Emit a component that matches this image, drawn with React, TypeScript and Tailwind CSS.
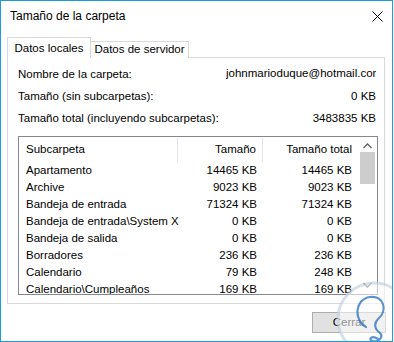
import type { ReactNode } from "react";

type FolderRow = {
  name: string;
  size: string;
  total: string;
};

const rows: FolderRow[] = [
  { name: "Apartamento", size: "14465 KB", total: "14465 KB" },
  { name: "Archive", size: "9023 KB", total: "9023 KB" },
  { name: "Bandeja de entrada", size: "71324 KB", total: "71324 KB" },
  { name: "Bandeja de entrada\\System X", size: "0 KB", total: "0 KB" },
  { name: "Bandeja de salida", size: "0 KB", total: "0 KB" },
  { name: "Borradores", size: "236 KB", total: "236 KB" },
  { name: "Calendario", size: "79 KB", total: "248 KB" },
  { name: "Calendario\\Cumpleaños", size: "169 KB", total: "169 KB" },
];

function InfoLine({ label, value }: { label: string; value: ReactNode }) {
  return (
    <div className="flex h-[22px] items-center justify-between">
      <span className="whitespace-nowrap">{label}</span>
      <span className="whitespace-nowrap">{value}</span>
    </div>
  );
}

function Watermark() {
  return (
    <svg
      className="pointer-events-none absolute left-[335px] top-[280px]"
      width="76"
      height="76"
      viewBox="0 0 76 76"
    >
      <circle cx="38" cy="38" r="36" fill="rgba(255,255,255,0.55)" stroke="rgba(190,205,220,0.6)" strokeWidth="3" />
      <path
        d="M30 46 C18 40 18 18 34 16 C48 14 52 30 42 38 C38 42 38 48 44 52 C48 56 42 62 36 60 C32 58 36 54 42 58"
        fill="none"
        stroke="rgba(40,110,190,0.75)"
        strokeWidth="2.2"
        strokeLinecap="round"
      />
    </svg>
  );
}

export default function App() {
  return (
    <div className="relative h-[342px] w-[393px] overflow-hidden border border-[#1e9be6] bg-white font-['Liberation_Sans','Noto_Sans',sans-serif] text-[11.5px] leading-none text-black">
      {/* title bar */}
      <div className="flex h-[30px] items-center justify-between pl-[9px] pr-[9px]">
        <span className="whitespace-nowrap text-[12px]">Tamaño de la carpeta</span>
        <svg width="11" height="11" viewBox="0 0 11 11">
          <path d="M0.5 0.5 L10.5 10.5 M10.5 0.5 L0.5 10.5" stroke="#000" strokeWidth="1" />
        </svg>
      </div>

      {/* tabs */}
      <div className="relative z-10 ml-[6px] mt-[6px] flex h-[21px] items-end">
        <div className="flex h-[21px] w-[84px] items-start justify-center whitespace-nowrap border border-b-0 border-[#d9d9d9] bg-white pt-[5px]">
          Datos locales
        </div>
        <div className="flex h-[17px] w-[98px] items-center justify-center whitespace-nowrap border border-l-0 border-b-0 border-[#d9d9d9] bg-white">
          Datos de servidor
        </div>
      </div>

      {/* panel */}
      <div className="ml-[6px] mt-[-1px] h-[247px] w-[378px] border border-[#d9d9d9] pl-[10px] pr-[7px] pt-[6px]">
        <div className="pr-[1px]">
          <InfoLine
            label="Nombre de la carpeta:"
            value={<span className="inline-block w-[150px] overflow-hidden text-left">johnmarioduque@hotmail.com</span>}
          />
          <InfoLine label="Tamaño (sin subcarpetas):" value="0 KB" />
          <InfoLine label="Tamaño total (incluyendo subcarpetas):" value="3483835 KB" />
        </div>

        {/* list */}
        <div className="mt-[6px] flex h-[159px] w-[360px] border border-[#828790]">
          <div className="flex-1 overflow-hidden">
            <div className="flex h-[25px] items-center">
              <div className="flex h-[24px] w-[159px] items-center border-r border-[#e5e5e5] pl-[7px]">Subcarpeta</div>
              <div className="flex h-[24px] w-[85px] items-center justify-end border-r border-[#e5e5e5] pr-[6px]">Tamaño</div>
              <div className="flex h-[24px] w-[95px] items-center justify-end whitespace-nowrap pr-[6px]">Tamaño total</div>
            </div>
            {rows.map((row) => (
              <div key={row.name} className="flex h-[17px] items-center">
                <div className="w-[159px] whitespace-nowrap pl-[7px]">{row.name}</div>
                <div className="w-[85px] whitespace-nowrap pr-[6px] text-right">{row.size}</div>
                <div className="w-[95px] whitespace-nowrap pr-[6px] text-right">{row.total}</div>
              </div>
            ))}
          </div>
          {/* scrollbar */}
          <div className="flex w-[19px] flex-col items-center bg-white">
            <svg width="9" height="6" viewBox="0 0 9 6" className="mt-[6px]">
              <path d="M0.5 5 L4.5 1 L8.5 5" fill="none" stroke="#606060" strokeWidth="1.3" />
            </svg>
            <div className="mt-[3px] h-[32px] w-[15px] bg-[#cdcdcd]" />
            <div className="flex-1" />
            <svg width="9" height="6" viewBox="0 0 9 6" className="mb-[6px]">
              <path d="M0.5 1 L4.5 5 L8.5 1" fill="none" stroke="#606060" strokeWidth="1.3" />
            </svg>
          </div>
        </div>
      </div>

      {/* footer */}
      <div className="flex justify-end pr-[6px] pt-[8px]">
        <button className="flex h-[21px] w-[74px] items-center justify-center border border-[#adadad] bg-[#e1e1e1] text-[11.5px] text-black">
          Cerrar
        </button>
      </div>

      <Watermark />
    </div>
  );
}
